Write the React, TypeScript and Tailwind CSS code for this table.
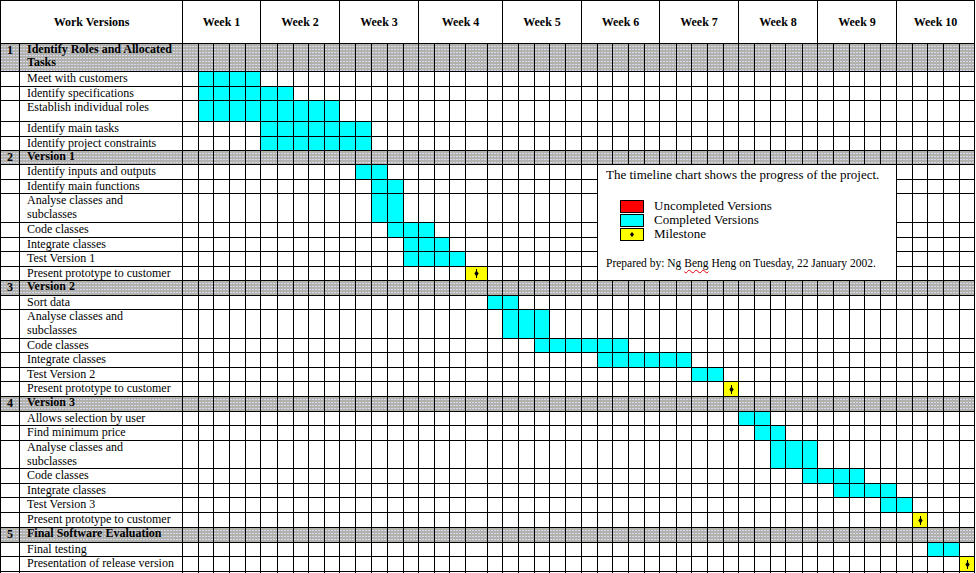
type Row = {
  no?: string
  label: string
  section?: boolean
  from?: number
  to?: number
  milestone?: number
}

// index, task, then 10 weeks x 5 day columns (week 4 has one wide column)
const COLS =
  'grid-cols-[18px_162px_15px_14px_15px_15px_14px_16px_15px_14px_15px_14px_15px_15px_15px_15px_14px_15px_14px_15px_21px_14px_15px_15px_14px_15px_15px_15px_14px_15px_15px_14px_16px_14px_15px_15px_14px_15px_15px_14px_16px_14px_15px_15px_14px_15px_15px_15px_14px_15px_15px_14px]'

const ROW_TPL =
  'grid-rows-[42px_27px_14px_13px_20px_14px_13px_13px_14px_13px_28px_14px_13px_14px_13px_14px_13px_28px_13px_14px_13px_14px_14px_13px_14px_27px_14px_13px_14px_14px_14px_13px_14px_14px]'

// dithered grey of the section rows
const GRAY =
  'bg-[#b2b2ad] bg-[image:repeating-linear-gradient(90deg,transparent_0px,transparent_2px,#b2b2ad_2px,#b2b2ad_3px),repeating-linear-gradient(180deg,transparent_0px,transparent_2px,#d8d8f0_2px,#d8d8f0_3px)]'

const WEEKS = ['Week 1', 'Week 2', 'Week 3', 'Week 4', 'Week 5', 'Week 6', 'Week 7', 'Week 8', 'Week 9', 'Week 10']

const ROWS: Row[] = [
  { no: '1', label: 'Identify Roles and Allocated\nTasks', section: true },
  { label: 'Meet with customers', from: 1, to: 4 },
  { label: 'Identify specifications', from: 1, to: 6 },
  { label: 'Establish individual roles', from: 1, to: 9 },
  { label: 'Identify main tasks', from: 5, to: 11 },
  { label: 'Identify project constraints', from: 5, to: 11 },
  { no: '2', label: 'Version 1', section: true },
  { label: 'Identify inputs and outputs', from: 11, to: 12 },
  { label: 'Identify main functions', from: 12, to: 13 },
  { label: 'Analyse classes and\nsubclasses', from: 12, to: 13 },
  { label: 'Code classes', from: 13, to: 15 },
  { label: 'Integrate classes', from: 14, to: 16 },
  { label: 'Test Version 1', from: 14, to: 17 },
  { label: 'Present prototype to customer', milestone: 18 },
  { no: '3', label: 'Version 2', section: true },
  { label: 'Sort data', from: 19, to: 20 },
  { label: 'Analyse classes and\nsubclasses', from: 20, to: 22 },
  { label: 'Code classes', from: 22, to: 27 },
  { label: 'Integrate classes', from: 26, to: 31 },
  { label: 'Test Version 2', from: 32, to: 33 },
  { label: 'Present prototype to customer', milestone: 34 },
  { no: '4', label: 'Version 3', section: true },
  { label: 'Allows selection by user', from: 35, to: 36 },
  { label: 'Find minimum price', from: 36, to: 37 },
  { label: 'Analyse classes and\nsubclasses', from: 37, to: 39 },
  { label: 'Code classes', from: 39, to: 42 },
  { label: 'Integrate classes', from: 41, to: 44 },
  { label: 'Test Version 3', from: 44, to: 45 },
  { label: 'Present prototype to customer', milestone: 46 },
  { no: '5', label: 'Final Software Evaluation', section: true },
  { label: 'Final testing', from: 47, to: 48 },
  { label: 'Presentation of release version', milestone: 49 },
  { label: '' },
]

const DAYS = Array.from({ length: 50 }, (_, i) => i)

function Milestone() {
  return (
    <svg width="5" height="9" viewBox="0 0 5 9">
      <rect x="2" y="0" width="1" height="9" fill="#000" />
      <path d="M2.5 1.5 L4.7 4.5 L2.5 7.5 L0.3 4.5 Z" fill="#000" />
    </svg>
  )
}

// the note sits over merged cells d26..d44, rows of the Version 1 tasks
function Note() {
  return (
    <div className="col-start-29 col-end-48 row-start-9 row-end-16 bg-white pl-[8px] pt-[2px] text-[13px] leading-[15px]">
      <p>The timeline chart shows the progress of the project.</p>
      <div className="mt-[18px] ml-[14px] flex flex-col">
        {[
          { c: 'bg-[#ff0000]', t: 'Uncompleted Versions' },
          { c: 'bg-[#00ffff]', t: 'Completed Versions' },
          { c: 'bg-[#ffff00]', t: 'Milestone', m: true },
        ].map((l) => (
          <div key={l.t} className="flex h-[14px] items-start">
            <div className={`flex h-[13px] w-[24px] items-center justify-center border border-black ${l.c}`}>
              {l.m && (
                <svg width="4" height="5" viewBox="0 0 4 5">
                  <path d="M2 0 L4 2.5 L2 5 L0 2.5 Z" fill="#000" />
                </svg>
              )}
            </div>
            <span className="-mt-[2px] ml-[10px] leading-[15px]">{l.t}</span>
          </div>
        ))}
      </div>
      <p className="mt-[15px] text-[11.5px] leading-[13px]">
        Prepared by: Ng <span className="underline decoration-red-600 decoration-wavy decoration-1 underline-offset-2">Beng</span> Heng on Tuesday, 22 January 2002.
      </p>
    </div>
  )
}

export default function App() {
  return (
    <div className="min-h-screen bg-white font-['Liberation_Serif',serif] text-black">
      <div className={`grid w-max gap-px bg-black p-px ${COLS} ${ROW_TPL}`}>
        <div className="col-span-2 flex items-center justify-center bg-white text-[12px] font-bold">Work Versions</div>
        {WEEKS.map((w) => (
          <div key={w} className="col-span-5 flex items-center justify-center bg-white text-[12px] font-bold">
            {w}
          </div>
        ))}

        {ROWS.map((r, i) => {
          const covered = i >= 7 && i <= 13
          return [
            <div
              key={`n${i}`}
              className={`text-center text-[12px] leading-[13px] font-bold ${r.section ? GRAY : 'bg-white'}`}
            >
              {r.no}
            </div>,
            <div
              key={`l${i}`}
              className={`whitespace-pre-line pl-[7px] text-[12px] ${
                r.section ? `font-bold leading-[13px] ${GRAY}` : 'bg-white leading-[14px]'
              }`}
            >
              <span className="-mt-px block">{r.label}</span>
            </div>,
            ...DAYS.filter((d) => !(covered && d >= 26 && d <= 44)).map((d) => {
              if (r.milestone === d)
                return (
                  <div key={`${i}-${d}`} className="flex items-center justify-center bg-[#ffff00]">
                    <Milestone />
                  </div>
                )
              const on = r.from !== undefined && r.to !== undefined && d >= r.from && d <= r.to
              return (
                <div key={`${i}-${d}`} className={on ? 'bg-[#00ffff]' : r.section ? GRAY : 'bg-white'} />
              )
            }),
          ]
        })}

        <Note />
      </div>
    </div>
  )
}
